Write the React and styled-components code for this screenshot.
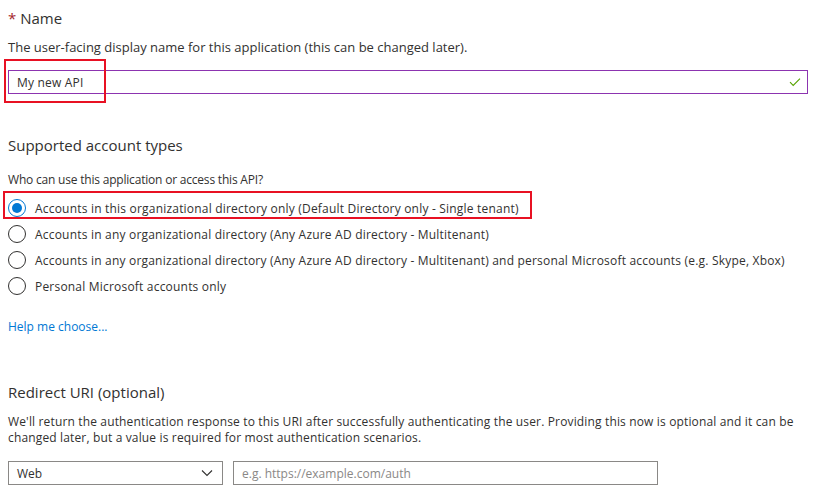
import React from "react";
import styled, { createGlobalStyle } from "styled-components";

const GlobalStyle = createGlobalStyle`
  html, body {
    margin: 0;
    padding: 0;
    background: #fff;
  }
  body {
    font-family: "Open Sans", "Noto Sans", sans-serif;
    color: #323130;
  }
`;

const accountTypes = [
  "Accounts in this organizational directory only (Default Directory only - Single tenant)",
  "Accounts in any organizational directory (Any Azure AD directory - Multitenant)",
  "Accounts in any organizational directory (Any Azure AD directory - Multitenant) and personal Microsoft accounts (e.g. Skype, Xbox)",
  "Personal Microsoft accounts only",
];

export default function App() {
  return (
    <Page>
      <GlobalStyle />

      {/* Name */}
      <SectionTitle>
        <Required>*</Required> Name
      </SectionTitle>
      <Description $top={11} $size={13}>
        The user-facing display name for this application (this can be changed later).
      </Description>
      <InputRow>
        <Highlight style={{ left: -4, top: -11, width: 102, height: 44 }} />
        <NameInput>
          <span>My new API</span>
          <svg width="12" height="10" viewBox="0 0 12 10">
            <path d="M1 5.2 L4.2 8.4 L11 1.6" fill="none" stroke="#57a300" strokeWidth="1.1" />
          </svg>
        </NameInput>
      </InputRow>

      {/* Account types */}
      <SectionTitle $top={41}>Supported account types</SectionTitle>
      <Description $top={17} $spacing={-0.2}>
        Who can use this application or access this API?
      </Description>
      <RadioList>
        {accountTypes.map((label, i) => (
          <RadioRow key={label}>
            {i === 0 && <Highlight style={{ left: -5, top: -4, width: 529, height: 28 }} />}
            <Radio $checked={i === 0} />
            <RadioLabel>{label}</RadioLabel>
          </RadioRow>
        ))}
      </RadioList>
      <HelpLink>Help me choose...</HelpLink>

      {/* Redirect URI */}
      <SectionTitle $top={47}>Redirect URI (optional)</SectionTitle>
      <Description $top={12} $spacing={0.15}>
        We'll return the authentication response to this URI after successfully authenticating the user. Providing this now is optional and it can be changed later, but a value is required for most authentication scenarios.
      </Description>
      <Controls>
        <Select>
          <span>Web</span>
          <svg width="12" height="8" viewBox="0 0 12 8">
            <path d="M1 1.5 L6 6.5 L11 1.5" fill="none" stroke="#323130" strokeWidth="1.1" />
          </svg>
        </Select>
        <UriInput>e.g. https://example.com/auth</UriInput>
      </Controls>
    </Page>
  );
}

/* ===== styled-components ===== */
const Page = styled.div`
  width: 819px;
  height: 499px;
  box-sizing: border-box;
  padding: 8px 11px 0 8px;
  overflow: hidden;
`;

const SectionTitle = styled.div`
  font-size: 15px;
  line-height: 20px;
  margin-top: ${(p) => p.$top || 0}px;
`;

const Required = styled.span`
  color: #a4262c;
`;

const Description = styled.div`
  font-size: ${(p) => p.$size || 12}px;
  letter-spacing: ${(p) => p.$spacing || 0}px;
  line-height: 16px;
  margin-top: ${(p) => p.$top || 0}px;
`;

const InputRow = styled.div`
  position: relative;
  margin-top: 15px;
`;

const Highlight = styled.div`
  position: absolute;
  box-sizing: border-box;
  border: 2px solid #e81123;
  pointer-events: none;
  z-index: 1;
`;

const NameInput = styled.div`
  height: 24px;
  box-sizing: border-box;
  border: 1px solid #8c34b0;
  display: flex;
  align-items: center;
  justify-content: space-between;
  padding: 0 6px 0 8px;
  font-size: 12px;
  letter-spacing: 0.2px;
`;

const RadioList = styled.div`
  margin-top: 7px;
  display: flex;
  flex-direction: column;
`;

const RadioRow = styled.div`
  position: relative;
  height: 26px;
  display: flex;
  align-items: center;
  gap: 9px;
`;

const Radio = styled.span`
  width: 18px;
  height: 18px;
  box-sizing: border-box;
  border-radius: 50%;
  border: 1px solid ${(p) => (p.$checked ? "#0078d4" : "#323130")};
  display: flex;
  align-items: center;
  justify-content: center;
  flex-shrink: 0;

  &::after {
    content: "";
    width: 10px;
    height: 10px;
    border-radius: 50%;
    background: ${(p) => (p.$checked ? "#0078d4" : "transparent")};
  }
`;

const RadioLabel = styled.span`
  font-size: 12px;
  letter-spacing: 0.2px;
  white-space: nowrap;
`;

const HelpLink = styled.a`
  display: block;
  margin-top: 20px;
  font-size: 12px;
  line-height: 16px;
  color: #0078d4;
  cursor: pointer;
`;

const Controls = styled.div`
  margin-top: 15px;
  display: flex;
  gap: 10px;
`;

const Field = styled.div`
  height: 24px;
  box-sizing: border-box;
  border: 1px solid #8a8886;
  display: flex;
  align-items: center;
  font-size: 12px;
`;

const Select = styled(Field)`
  width: 215px;
  justify-content: space-between;
  padding: 0 9px 0 8px;
`;

const UriInput = styled(Field)`
  width: 425px;
  padding: 0 8px;
  color: #8a8886;
`;
